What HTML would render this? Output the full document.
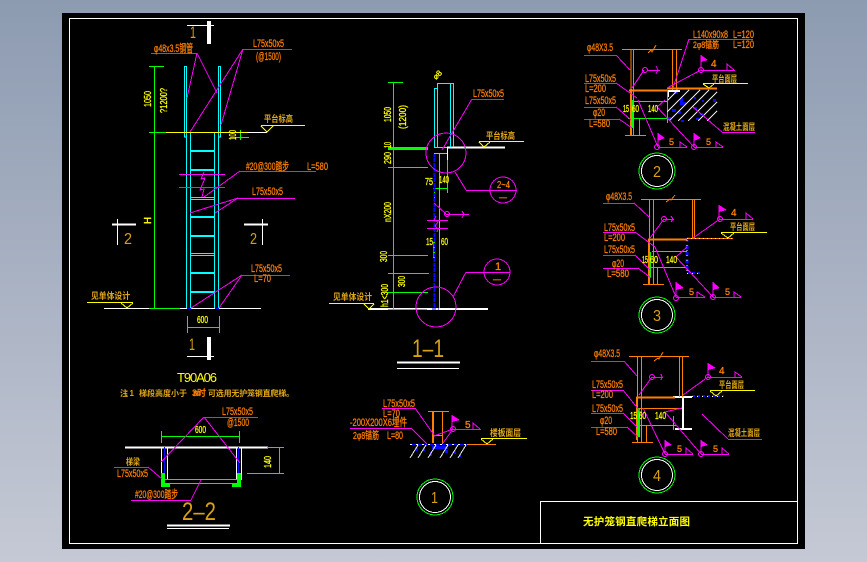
<!DOCTYPE html>
<html lang="zh">
<head>
<meta charset="utf-8">
<title>无护笼钢直爬梯立面图</title>
<style>
html,body{margin:0;padding:0;width:867px;height:562px;overflow:hidden;background:linear-gradient(#8d9bb1,#c5c9d5);}
svg{position:absolute;left:0;top:0;display:block;}
.g path,.g line,.g circle,.g rect,.g polygon{shape-rendering:crispEdges;}
text{font-family:"Liberation Sans","Noto Sans CJK SC",sans-serif;}
.o{fill:#ff7f00;stroke:#ff7f00;stroke-width:.3px;font-size:11px;}
.y{fill:#ffff00;stroke:#ffff00;stroke-width:.3px;font-size:10px;}
.d{fill:#e0a818;font-size:9px;font-weight:bold;}
.c{fill:#d8a014;}
</style>
</head>
<body>
<svg class="g" width="867" height="562" viewBox="0 0 867 562" xmlns="http://www.w3.org/2000/svg">
<rect x="62" y="13" width="743" height="536" fill="#000"/>
<g fill="none" stroke="#fff" stroke-width="1">
<rect x="69.5" y="18.5" width="728" height="525"/>
<path d="M540.5 543V501.5H797"/>
</g>

<!-- white lines -->
<g fill="none" stroke="#fff" stroke-width="1">
<path d="M187 25.5H214M187 356.5H214M117.5 219V245M262.5 219V245M247 132.5H267M104 308.5H261"/>
<path d="M161.5 447V480M167.5 447V480M236.5 447V480M241.5 447V480"/>
<path d="M167 528.5H229M397 368.5H459"/>
<path d="M447.5 147V160M410 444.5H467"/>
</g>
<g fill="none" stroke="#fff" stroke-width="4">
<path d="M209 21V44M209 337V360"/>
</g>
<g fill="none" stroke="#fff" stroke-width="2">
<path d="M112 224.5H136M244 224.5H268M125 447.5H268M167 525.5H230M397 362.5H460M368 309H488M447 147.5H505M683 397V429M675 429H692M673 397H692"/>
</g>

<!-- green -->
<g fill="none" stroke="#00ff00" stroke-width="1">
<path d="M154.5 66V308M149 66.5H164M149 132.5H166M149 308.5H180"/>
<path d="M187 327.5H219M187.5 316V333M219.5 316V333M230 137.5H249M240.5 130V140"/>
<path d="M161 436.5H239M161.5 431V443M239.5 431V443M267 447.5H284M247 473.5H284M279.5 447V474M164 479.5H237M164 483.5H237"/>
<path d="M393.5 82V309M388 82.5H403M388 167.5H428M388 255.5H428M388 273.5H429M388 292.5H428M388 309.5H427"/>
<path d="M447.5 160V193M433 188.5H448M434.5 188V200"/>
<path d="M628 118.5H667M632.5 100V128M667.5 108V123"/>
<path d="M648 267.5H687M637 425.5H677M673.5 416V430"/>
</g>
<g fill="#00ff00">
<rect x="388" y="147" width="40" height="3"/>
<rect x="161" y="473" width="4" height="14"/><rect x="161" y="483" width="9" height="4"/>
<rect x="237" y="473" width="4" height="14"/><rect x="232" y="483" width="9" height="4"/>
<rect x="433" y="242" width="2" height="16"/>
<rect x="648" y="252" width="3" height="26"/>
<rect x="637" y="408" width="3" height="29"/>
</g>

<!-- blue -->
<g fill="none" stroke="#0a0aff" stroke-width="1">
<path d="M164.5 447V473M238.5 447V473M187 308.5H191M215 308.5H219"/>
<path d="M434.5 153V308" stroke-dasharray="4 1" stroke-width="2"/>
<path d="M432 309H439M412 444.5H467" stroke-dasharray="4 2"/>
<path d="M687 238V273" stroke-width="3" stroke-dasharray="4 3"/>
<path d="M687 238H702M687 273H702M692 396H724" stroke-width="2" stroke-dasharray="3 2"/>
</g>
<g fill="#0a0aff">
<rect x="432" y="446" width="16" height="3"/>
<rect x="416" y="447" width="2" height="4"/><rect x="422" y="449" width="3" height="2"/><rect x="430" y="452" width="2" height="4"/><rect x="445" y="450" width="3" height="3"/><rect x="454" y="451" width="2" height="3"/><rect x="459" y="455" width="2" height="2"/>
<rect x="674" y="91" width="4" height="3"/><rect x="680" y="98" width="3" height="7"/><rect x="682" y="102" width="4" height="3"/><rect x="672" y="109" width="4" height="3"/><rect x="678" y="111" width="3" height="3"/><rect x="693" y="107" width="4" height="2"/><rect x="696" y="118" width="3" height="2"/><rect x="702" y="100" width="2" height="2"/><rect x="713" y="99" width="3" height="3"/><rect x="694" y="97" width="2" height="2"/><rect x="681" y="120" width="3" height="2"/><rect x="668" y="117" width="3" height="3"/><rect x="700" y="113" width="3" height="2"/>
</g>

<!-- hatching -->
<g fill="none" stroke="#e8e8e8" stroke-width="1">
<path d="M410 458L418 445M418 458L426 445M428 458L436 445M440 458L448 445M450 458L458 445M458 458L466 445"/>
<path d="M669 121L700 90M678 121L709 90M688 121L717 92M698 121L717 102M707 121L717 111M667 112L689 90M667 101L678 90"/>
</g>
<path d="M668 97V91H680" fill="none" stroke="#fff" stroke-width="2"/>
<path d="M687 238.5H702M687 273.5H702M687 240V271M692 396.5H724" fill="none" stroke="#fff" stroke-width="1" stroke-dasharray="1 4"/>

<!-- cyan -->
<g fill="none" stroke="#00ffff" stroke-width="1">
<path d="M184.5 66V137H187M186.5 66V132M184.5 66.5H186.5M218.5 66V132M220.5 66V137H218M218.5 66.5H220.5"/>
<path d="M186.5 132V308M190.5 132V308M214.5 132V308M218.5 132V308M190 132.5H215"/>
<path d="M190 197.5H215M190 199.5H215M190 253.5H215M190 255.5H215"/>
<path d="M434.5 88V147M437.5 83V147M450.5 83V147M453.5 83V147M437 83.5H453M434 88.5H437"/>
<path d="M434 147.5H447M434 153.5H447M439.5 153V308"/>
</g>
<g fill="none" stroke="#00ffff" stroke-width="2">
<path d="M190 151H215M190 170H215M190 217H215M190 236H215M190 273H215M190 292H215"/>
</g>

<!-- yellow lines -->
<g fill="none" stroke="#ffff00" stroke-width="1">
<path d="M166 132.5H247M87 302.5H133M121 303L127 308L133 303"/>
<path d="M261 125.5H305M261 126L267 132L273 126"/>
<path d="M479 141.5H524M479 142L484 147L490 142"/>
<path d="M329 303.5H374M364 304L369 309L374 304"/>
<path d="M481 438.5H527M481 439L487 444L493 439"/>
<path d="M703 83.5H748M703 84L709 88L714 84"/>
<path d="M721 232.5H767M721 233L728 238L734 233"/>
<path d="M710 390.5H755M710 391L716 396L722 391"/>
</g>

<!-- orange -->
<g fill="none" stroke="#ff7f00" stroke-width="1">
<path d="M428 411.5H449M442.5 412V444M434 435.5H443"/>
<path d="M467 444.5H496"/>
<path d="M622 49.5H682M633.5 49V135M631 49V135M672.5 49V90M676.5 49V90M633 101.5H667M667.5 90V108M639.5 119V135M625 135.5H646"/>
<path d="M648 53L651 50L652 52L656 45M641 199.5H701M649.5 199V284M653.5 199V284M692.5 199V238M694.5 199V238M652 251.5H687M657.5 267V284M643 284.5H664M666 202L670 199L671 200L675 195"/>
<path d="M687 238.5H733"/>
<path d="M629 356.5H689M637.5 356V442M641.5 356V442M679.5 356V397M682.5 356V397M640 408.5H682M646.5 425V442M632 442.5H653M654 361L658 358L659 359L663 352"/>
</g>
<g fill="none" stroke="#ff7f00" stroke-width="2">
<path d="M433 412V443M667 88.5H717M629 90.5H667M631 89V135M648 239.5H687M649 239V284M636 397.5H675M637 398V440"/>
</g>
<path d="M687 238.5H733" fill="none" stroke="#fff" stroke-width="1" stroke-dasharray="1 3"/>

<!-- magenta lines -->
<g fill="none" stroke="#ff00ff" stroke-width="1">
<path d="M151 53.5H197M197 53L187 98M197 53L217 93"/>
<path d="M243 49.5H292M243 49L190 132M243 49L221 125"/>
<path d="M179 174.5H225M179 187.5H225M204 172L201 179L205 178L200 190L204 189L202 197"/>
<path d="M240 171.5H316M240 171L204 197"/>
<path d="M238 198.5H295M238 198L190 213M238 198L215 213"/>
<path d="M242 275.5H290M242 275L191 308M242 275L219 308"/>
<path d="M204 417.5H258M204 417L161 462M204 417L240 463"/>
<path d="M114 467.5H148M148 467L162 479M131 500.5H191M191 500L201 480"/>
<path d="M472 99.5H504M472 99L442 150M466 190.5H517M466 190L455 172"/>
<path d="M446 214.5H469M462 211L464 214L462 218M434 203L446 214"/>
<path d="M427 220.5H448M427 228.5H448M436 216L434 220L438 222L435 226L438 229L437 232"/>
<path d="M466 272.5H510M466 272L453 297"/>
<path d="M382 408.5H415M415 408L434 435M350 428.5H411M411 428L427 444M453 429.5H481M473 429V423L480 429M453 429L443 443M453 429L434 436M452 415V430"/>
<path d="M584 55.5H616M616 55L630 70M689 39.5H753M689 39L673 88M701 70.5H735M727 70V64L734 70M701 55V70M701 70L667 88"/>
<path d="M584 83.5H616M616 83L637 98M584 107.5H616M616 107L631 120M584 119.5H619M619 119L632 128"/>
<path d="M658 147.5H687M680 147V142L687 147M658 133V147M694 147.5H723M716 147V142L723 147M694 133V147M658 147L638 100M694 147L657 107L665 100"/>
<path d="M722 132.5H755M722 132L693 107"/>
<path d="M644 70L632 88M648 70.5H660M656 66L658 70L656 74"/>
<path d="M603 203.5H634M634 203L650 218M720 219.5H753M746 219V213L753 219M719 205V219M720 219L693 238M664 219L650 238M664 219.5H674M671 216L673 219L671 222"/>
<path d="M603 232.5H635M635 232L655 247M603 255.5H635M635 255L650 270M603 268.5H638M638 268L651 278"/>
<path d="M676 297.5H705M697 297V292L705 297M676 282V297M713 297.5H741M734 297V292L741 297M713 282V297M676 297L655 247M713 297L676 257L687 247"/>
<path d="M591 361.5H624M624 361L637 376M708 377.5H742M735 377V372L742 377M708 363V377M708 377L683 395M652 377L639 395M652 377.5H663M661 374L662 377L661 380"/>
<path d="M591 390.5H623M623 390L643 415M591 413.5H623M623 413L637 427M591 427.5H627M627 427L638 437"/>
<path d="M665 454.5H693M686 454V448L693 454M665 440V454M701 454.5H729M722 454V448L729 454M701 440V454M665 454L643 408M701 454L665 412L682 408"/>
<path d="M728 439.5H762M728 439L702 414"/>
<circle cx="446" cy="153" r="20"/><circle cx="503" cy="190" r="13"/>
<circle cx="497" cy="272" r="13"/><circle cx="436" cy="307" r="20"/>
<circle cx="447" cy="214" r="2.5"/><circle cx="453" cy="429" r="2.5"/>
<circle cx="701" cy="70" r="2.5"/><circle cx="645" cy="70" r="2.5"/><circle cx="657" cy="147" r="2.5"/><circle cx="694" cy="147" r="2.5"/>
<circle cx="720" cy="219" r="2.5"/><circle cx="664" cy="219" r="2.5"/><circle cx="676" cy="298" r="2.5"/><circle cx="713" cy="297" r="2.5"/>
<circle cx="708" cy="377" r="2.5"/><circle cx="652" cy="377" r="2.5"/><circle cx="665" cy="454" r="2.5"/><circle cx="701" cy="454" r="2.5"/>
</g>
<g fill="#ff00ff">
<polygon points="452,415 460,420 452,422"/>
<polygon points="701,55 708,60 701,62"/>
<polygon points="658,133 665,138 658,141"/>
<polygon points="694,133 701,138 694,141"/>
<polygon points="719,205 727,210 719,212"/>
<polygon points="676,282 684,288 676,290"/>
<polygon points="713,282 720,288 713,290"/>
<polygon points="708,363 716,368 708,370"/>
<polygon points="665,440 672,445 665,447"/>
<polygon points="701,440 708,445 701,447"/>
</g>

<!-- detail circles -->
<g fill="none" stroke-width="1">
<circle cx="435" cy="497" r="18" stroke="#00ff00"/><circle cx="435" cy="497" r="15.5" stroke="#fff"/>
<circle cx="657" cy="171" r="18" stroke="#00ff00"/><circle cx="657" cy="171" r="15.5" stroke="#fff"/>
<circle cx="657" cy="315" r="18" stroke="#00ff00"/><circle cx="657" cy="315" r="15.5" stroke="#fff"/>
<circle cx="657" cy="475" r="18" stroke="#00ff00"/><circle cx="657" cy="475" r="15.5" stroke="#fff"/>
</g>

<!-- text: left elevation -->
<text class="o" x="154" y="52" textLength="39" lengthAdjust="spacingAndGlyphs">φ48x3.5钢管</text>
<text class="o" x="253" y="47" textLength="31" lengthAdjust="spacingAndGlyphs">L75x50x5</text>
<text class="o" x="256" y="60" textLength="25" lengthAdjust="spacingAndGlyphs">(@1500)</text>
<text class="o" x="246" y="170" textLength="43" lengthAdjust="spacingAndGlyphs">#20@300踏步</text>
<text class="o" x="307" y="170" textLength="21" lengthAdjust="spacingAndGlyphs">L=580</text>
<text class="o" x="252" y="195" textLength="31" lengthAdjust="spacingAndGlyphs">L75x50x5</text>
<text class="o" x="251" y="272" textLength="31" lengthAdjust="spacingAndGlyphs">L75x50x5</text>
<text class="o" x="254" y="282" textLength="17" lengthAdjust="spacingAndGlyphs">L=70</text>
<text class="y" x="0" y="0" transform="translate(151,107) rotate(-90)" textLength="16" lengthAdjust="spacingAndGlyphs">1050</text>
<text class="y" x="0" y="0" transform="translate(167,113) rotate(-90)" textLength="25" lengthAdjust="spacingAndGlyphs">?1200?</text>
<text class="y" x="0" y="0" transform="translate(151,224) rotate(-90)" textLength="7" lengthAdjust="spacingAndGlyphs">H</text>
<text class="y" x="0" y="0" transform="translate(236,140) rotate(-90)" textLength="10" lengthAdjust="spacingAndGlyphs">100</text>
<text class="y" x="197" y="323" textLength="11" lengthAdjust="spacingAndGlyphs">600</text>
<text class="d" x="264" y="122" textLength="29" lengthAdjust="spacingAndGlyphs">平台标高</text>
<text class="d" x="91" y="299" textLength="39" lengthAdjust="spacingAndGlyphs">见单体设计</text>
<text class="c" x="190" y="38" font-size="17" textLength="6" lengthAdjust="spacingAndGlyphs">1</text>
<text class="c" x="189" y="350" font-size="17" textLength="6" lengthAdjust="spacingAndGlyphs">1</text>
<text class="c" x="124" y="244" font-size="16" textLength="8" lengthAdjust="spacingAndGlyphs">2</text>
<text class="c" x="250" y="244" font-size="16" textLength="7" lengthAdjust="spacingAndGlyphs">2</text>

<text x="177" y="382" fill="#ffff00" font-size="13" textLength="40" lengthAdjust="spacing">T90A06</text>
<text class="d" x="120" y="396" font-size="8" style="font-size:8px" textLength="14">注：1</text>
<text class="d" x="139" y="396" style="font-size:8px" textLength="48">梯段高度小于</text>
<text class="o" x="192" y="396" style="font-size:9px" textLength="14">3m时</text>
<text class="d" x="208" y="396" style="font-size:8px" textLength="86">可选用无护笼钢直爬梯。</text>

<!-- 2-2 -->
<text class="o" x="222" y="415" textLength="31" lengthAdjust="spacingAndGlyphs">L75x50x5</text>
<text class="o" x="227" y="426" textLength="22" lengthAdjust="spacingAndGlyphs">@1500</text>
<text class="y" x="195" y="433" textLength="11" lengthAdjust="spacingAndGlyphs">600</text>
<text class="y" x="0" y="0" transform="translate(271,468) rotate(-90)" textLength="12" lengthAdjust="spacingAndGlyphs">140</text>
<text class="d" x="126" y="465" textLength="14" lengthAdjust="spacingAndGlyphs">梯梁</text>
<text class="o" x="117" y="477" textLength="31" lengthAdjust="spacingAndGlyphs">L75x50x5</text>
<text class="o" x="135" y="498" textLength="43" lengthAdjust="spacingAndGlyphs">#20@300踏步</text>
<text class="c" x="182" y="520" font-size="25" textLength="34" lengthAdjust="spacingAndGlyphs">2–2</text>

<!-- 1-1 -->
<text class="y" x="0" y="0" transform="translate(391,122) rotate(-90)" textLength="15" lengthAdjust="spacingAndGlyphs">1050</text>
<text class="y" x="0" y="0" transform="translate(406,129) rotate(-90)" textLength="24" lengthAdjust="spacingAndGlyphs">(1200)</text>
<text class="y" x="0" y="0" transform="translate(391,148) rotate(-90)" textLength="6" lengthAdjust="spacingAndGlyphs">10</text>
<text class="y" x="0" y="0" transform="translate(391,164) rotate(-90)" textLength="12" lengthAdjust="spacingAndGlyphs">290</text>
<text class="y" x="0" y="0" transform="translate(391,222) rotate(-90)" textLength="20" lengthAdjust="spacingAndGlyphs">nX200</text>
<text class="y" x="0" y="0" transform="translate(387,262) rotate(-90)" textLength="11" lengthAdjust="spacingAndGlyphs">300</text>
<text class="y" x="0" y="0" transform="translate(405,287) rotate(-90)" textLength="11" lengthAdjust="spacingAndGlyphs">300</text>
<text class="y" x="0" y="0" transform="translate(388,307) rotate(-90)" textLength="23" lengthAdjust="spacingAndGlyphs">h1&lt;300</text>
<text class="y" x="0" y="0" transform="translate(436,80) rotate(-45)" style="font-size:8px">⌀8</text>
<text class="o" x="473" y="97" textLength="31" lengthAdjust="spacingAndGlyphs">L75x50x5</text>
<text class="d" x="486" y="139" textLength="29" lengthAdjust="spacingAndGlyphs">平台标高</text>
<text class="y" x="425" y="185" textLength="8" lengthAdjust="spacingAndGlyphs">75</text>
<text class="y" x="439" y="183" textLength="10" lengthAdjust="spacingAndGlyphs">140</text>
<text class="o" x="497" y="188" style="font-size:10px" textLength="13" lengthAdjust="spacingAndGlyphs">2~4</text>
<text class="o" x="499" y="200" style="font-size:8px">—</text>
<text class="o" x="495" y="270" style="font-size:11px">1</text>
<text class="o" x="493" y="282" style="font-size:8px">—</text>
<text class="y" x="426" y="245" textLength="7" lengthAdjust="spacingAndGlyphs">15</text>
<text class="y" x="441" y="245" textLength="7" lengthAdjust="spacingAndGlyphs">60</text>
<text class="d" x="333" y="300" textLength="39" lengthAdjust="spacingAndGlyphs">见单体设计</text>
<text class="c" x="412" y="357" font-size="25" textLength="32" lengthAdjust="spacingAndGlyphs">1–1</text>

<!-- detail 1 -->
<text class="o" x="383" y="407" textLength="32" lengthAdjust="spacingAndGlyphs">L75x50x5</text>
<text class="o" x="383" y="417" textLength="17" lengthAdjust="spacingAndGlyphs">L=70</text>
<text class="o" x="350" y="426" textLength="57" lengthAdjust="spacingAndGlyphs">-200X200X6埋件</text>
<text class="o" x="353" y="439" textLength="26" lengthAdjust="spacingAndGlyphs" style="font-size:10px">2φ8锚筋</text>
<text class="o" x="387" y="439" textLength="16" lengthAdjust="spacingAndGlyphs">L=80</text>
<text class="o" x="465" y="428" style="font-size:10px">5</text>
<text class="d" x="490" y="436" textLength="31" lengthAdjust="spacingAndGlyphs">楼板面层</text>
<text class="c" x="431" y="503" font-size="16" textLength="7" lengthAdjust="spacingAndGlyphs">1</text>

<!-- detail 2 -->
<text class="o" x="587" y="51" textLength="26" lengthAdjust="spacingAndGlyphs">φ48X3.5</text>
<text class="o" x="693" y="38" textLength="35" lengthAdjust="spacingAndGlyphs">L140x90x8</text>
<text class="o" x="733" y="38" textLength="21" lengthAdjust="spacingAndGlyphs">L=120</text>
<text class="o" x="693" y="48" textLength="26" style="font-size:9px" lengthAdjust="spacingAndGlyphs">2φ8锚筋</text>
<text class="o" x="733" y="48" textLength="21" lengthAdjust="spacingAndGlyphs">L=120</text>
<text class="o" x="711" y="67" style="font-size:10px">4</text>
<text class="d" x="712" y="82" textLength="25" lengthAdjust="spacingAndGlyphs">平台面层</text>
<text class="o" x="585" y="82" textLength="31" lengthAdjust="spacingAndGlyphs">L75x50x5</text>
<text class="o" x="585" y="92" textLength="21" lengthAdjust="spacingAndGlyphs">L=200</text>
<text class="o" x="585" y="104" textLength="31" lengthAdjust="spacingAndGlyphs">L75x50x5</text>
<text class="o" x="593" y="116" textLength="12" lengthAdjust="spacingAndGlyphs">φ20</text>
<text class="o" x="589" y="127" textLength="21" lengthAdjust="spacingAndGlyphs">L=580</text>
<text class="y" x="623" y="112" textLength="6" lengthAdjust="spacingAndGlyphs">15</text>
<text class="y" x="632" y="112" textLength="7" lengthAdjust="spacingAndGlyphs">60</text>
<text class="y" x="648" y="112" textLength="10" lengthAdjust="spacingAndGlyphs">140</text>
<text class="o" x="669" y="145" style="font-size:9px">5</text>
<text class="o" x="706" y="145" style="font-size:9px">5</text>
<text class="d" x="723" y="130" textLength="32" lengthAdjust="spacingAndGlyphs">混凝土面层</text>
<text class="c" x="653" y="177" font-size="16" textLength="8" lengthAdjust="spacingAndGlyphs">2</text>

<!-- detail 3 -->
<text class="o" x="606" y="200" textLength="26" lengthAdjust="spacingAndGlyphs">φ48X3.5</text>
<text class="o" x="731" y="216" style="font-size:10px">4</text>
<text class="d" x="730" y="230" textLength="25" lengthAdjust="spacingAndGlyphs">平台面层</text>
<text class="o" x="604" y="231" textLength="31" lengthAdjust="spacingAndGlyphs">L75x50x5</text>
<text class="o" x="604" y="241" textLength="21" lengthAdjust="spacingAndGlyphs">L=200</text>
<text class="o" x="604" y="253" textLength="31" lengthAdjust="spacingAndGlyphs">L75x50x5</text>
<text class="o" x="612" y="267" textLength="12" lengthAdjust="spacingAndGlyphs">φ20</text>
<text class="o" x="607" y="277" textLength="22" lengthAdjust="spacingAndGlyphs">L=580</text>
<text class="y" x="642" y="263" textLength="6" lengthAdjust="spacingAndGlyphs">15</text>
<text class="y" x="650" y="263" textLength="8" lengthAdjust="spacingAndGlyphs">60</text>
<text class="y" x="666" y="263" textLength="11" lengthAdjust="spacingAndGlyphs">140</text>
<text class="o" x="689" y="295" style="font-size:9px">5</text>
<text class="o" x="725" y="295" style="font-size:9px">5</text>
<text class="c" x="653" y="321" font-size="16" textLength="8" lengthAdjust="spacingAndGlyphs">3</text>

<!-- detail 4 -->
<text class="o" x="594" y="357" textLength="26" lengthAdjust="spacingAndGlyphs">φ48X3.5</text>
<text class="o" x="719" y="374" style="font-size:10px">4</text>
<text class="d" x="719" y="388" textLength="25" lengthAdjust="spacingAndGlyphs">平台面层</text>
<text class="o" x="592" y="388" textLength="31" lengthAdjust="spacingAndGlyphs">L75x50x5</text>
<text class="o" x="592" y="398" textLength="21" lengthAdjust="spacingAndGlyphs">L=200</text>
<text class="o" x="592" y="412" textLength="31" lengthAdjust="spacingAndGlyphs">L75x50x5</text>
<text class="o" x="600" y="424" textLength="12" lengthAdjust="spacingAndGlyphs">φ20</text>
<text class="o" x="596" y="435" textLength="21" lengthAdjust="spacingAndGlyphs">L=580</text>
<text class="y" x="630" y="419" textLength="7" lengthAdjust="spacingAndGlyphs">15</text>
<text class="y" x="639" y="419" textLength="7" lengthAdjust="spacingAndGlyphs">60</text>
<text class="y" x="655" y="419" textLength="11" lengthAdjust="spacingAndGlyphs">140</text>
<text class="o" x="677" y="452" style="font-size:9px">5</text>
<text class="o" x="713" y="452" style="font-size:9px">5</text>
<text class="d" x="728" y="436" textLength="32" lengthAdjust="spacingAndGlyphs">混凝土面层</text>
<text class="c" x="653" y="481" font-size="16" textLength="8" lengthAdjust="spacingAndGlyphs">4</text>

<!-- title -->
<text x="583" y="525" fill="#ffff00" font-size="10.5" font-weight="bold" textLength="107" lengthAdjust="spacing">无护笼钢直爬梯立面图</text>
</svg>
</body>
</html>
